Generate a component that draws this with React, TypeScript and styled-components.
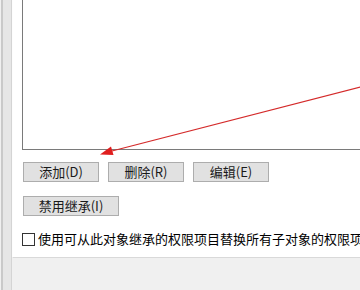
import styled, { createGlobalStyle } from "styled-components";

const GlobalStyle = createGlobalStyle`
    html, body {
        margin: 0;
        padding: 0;
        width: 360px;
        height: 290px;
        overflow: hidden;
        background-color: #f0f0f0;
    }
    body {
        font-family: "Noto Sans CJK SC", "Microsoft YaHei", sans-serif;
        font-size: 13px;
        color: #000;
    }
`

const App = () => {
    return (
        <>
            <GlobalStyle />
            <Window>
                <SideStrip />
                <Main>
                    <Panel>
                        <ListBox />
                        <ButtonRow>
                            <Button>添加(D)</Button>
                            <Button>删除(R)</Button>
                            <Button>编辑(E)</Button>
                        </ButtonRow>
                        <ButtonRow>
                            <Button $wide>禁用继承(I)</Button>
                        </ButtonRow>
                        <CheckRow>
                            <CheckBox />
                            <CheckLabel>使用可从此对象继承的权限项目替换所有子对象的权限项目</CheckLabel>
                        </CheckRow>
                    </Panel>
                </Main>
                {/* red annotation arrow drawn over the dialog */}
                <Arrow width="360" height="290" viewBox="0 0 360 290">
                    <line x1="372" y1="84" x2="110" y2="151.5" stroke="#d42a2a" strokeWidth="1.2" />
                    <polygon points="100,154.5 111,146.5 113.5,155" fill="#e01e1e" />
                </Arrow>
            </Window>
        </>
    )
}

export default App;

const Window = styled.div`
    position: relative;
    width: 360px;
    height: 290px;
    display: flex;
    background-color: #f0f0f0;
`

const SideStrip = styled.div`
    flex-shrink: 0;
    width: 8px;
    height: 100%;
    background-color: #e6e6e6;
    border-left: 2px solid #c9c9c9;
    border-right: 1px solid #d4d4d4;
    margin-left: 1px;
`

const Main = styled.div`
    flex: 1;
    min-width: 0;
    display: flex;
    flex-direction: column;
`

const Panel = styled.div`
    height: 257px;
    background-color: #fff;
    border-left: 1px solid #fdfdfd;
    border-bottom: 1px solid #d9d9d9;
    padding-left: 9px;
    display: flex;
    flex-direction: column;
    overflow: hidden;
`

const ListBox = styled.div`
    height: 149px;
    flex-shrink: 0;
    border-left: 1px solid #7a7a7a;
    border-bottom: 1px solid #7a7a7a;
    margin-right: -10px;
`

const ButtonRow = styled.div`
    display: flex;
    gap: 9px;
    margin-top: 12px;
    margin-left: 1px;

    & + & {
        margin-top: 14px;
    }
`

const Button = styled.button<{ $wide?: boolean }>`
    flex-shrink: 0;
    width: ${(p) => (p.$wide ? "96px" : "76px")};
    height: 20px;
    padding: 0;
    background-color: #e1e1e1;
    border: 1px solid #adadad;
    border-radius: 0;
    font-family: "Noto Sans CJK SC", sans-serif;
    font-size: 13px;
    line-height: 18px;
    color: #1a1a1a;
`

const CheckRow = styled.div`
    display: flex;
    align-items: center;
    gap: 3px;
    margin-top: 15px;
    white-space: nowrap;
`

const CheckBox = styled.span`
    width: 11px;
    height: 11px;
    flex-shrink: 0;
    border: 1px solid #333;
    background-color: #fff;
`

const CheckLabel = styled.span`
    font-size: 13px;
    line-height: 16px;
    color: #000;
`

const Arrow = styled.svg`
    position: absolute;
    left: 0;
    top: 0;
    pointer-events: none;
`
